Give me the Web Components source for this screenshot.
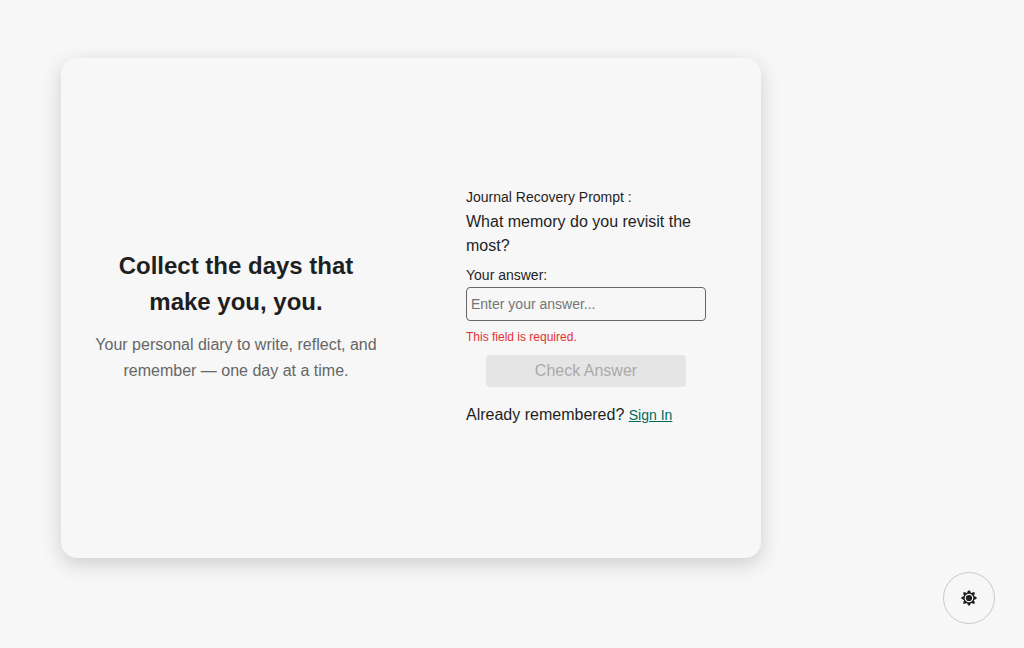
<!DOCTYPE html>
<html lang="en">
<head>
<meta charset="utf-8">
<meta name="viewport" content="width=device-width, initial-scale=1">
<title>Journal Recovery</title>
<style>
  body { margin: 0; background: #f7f7f7; color: #1f1f1f; font: 16px/24px "Liberation Sans", Arial, sans-serif; }
</style>
</head>
<body>
<diary-page>
  <auth-card>
    <diary-intro slot="intro">
      <span slot="title">Collect the days that make you, you.</span>
      <span slot="text">Your personal diary to write, reflect, and remember — one day at a time.</span>
    </diary-intro>
    <recovery-form slot="form">What memory do you revisit the most?</recovery-form>
  </auth-card>
  <theme-toggle slot="floating"></theme-toggle>
</diary-page>

<script>
const define = (name, markup) => {
  const template = document.createElement('template');
  template.innerHTML = '<style>*{box-sizing:border-box}</style>' + markup;
  customElements.define(name, class extends HTMLElement {
    constructor() {
      super();
      this.attachShadow({ mode: 'open' }).append(template.content.cloneNode(true));
    }
  });
};

define('diary-page', `
  <style>
    :host { display: block; }
    main { padding: 58px 61px; }
  </style>
  <main><slot></slot></main>
  <slot name="floating"></slot>
`);

define('auth-card', `
  <style>
    :host {
      display: grid; grid-template-columns: 1fr 1fr; align-items: center;
      max-width: 700px; min-height: 500px; border-radius: 16px;
      background: #f7f7f7; box-shadow: 0 6px 20px rgba(0, 0, 0, .17);
    }
  </style>
  <slot name="intro"></slot>
  <slot name="form"></slot>
`);

define('diary-intro', `
  <style>
    :host { display: block; padding: 16px 32px 0; text-align: center; }
    h1 { margin: 0 0 12px; font-size: 24px; line-height: 36px; }
    p { margin: 0; line-height: 26px; color: #666; }
  </style>
  <h1><slot name="title"></slot></h1>
  <p><slot name="text"></slot></p>
`);

define('recovery-form', `
  <style>
    :host { display: block; width: 240px; margin: 0 auto; padding-bottom: 4px; }
    form { display: flex; flex-direction: column; }
    h2, p { margin: 0; }
    h2, label, a { font-size: 14px; font-weight: 400; }
    h2 { margin-bottom: 1px; }
    label { margin-top: 5px; }
    input {
      width: 100%; height: 34px; padding: 4px; border: 1px solid #666; border-radius: 4px;
      background: transparent; color: inherit; font: 14px "Liberation Sans", Arial, sans-serif;
    }
    input::placeholder { color: #757575; }
    .error { margin-top: 8px; font-size: 12px; line-height: 16px; color: #e53030; }
    button {
      align-self: center; width: 200px; height: 32px; margin: 10px 0 16px; padding: 0;
      border: 0; border-radius: 4px; background: #e5e5e5; color: #aaa;
      font: 16px "Liberation Sans", Arial, sans-serif;
    }
    a { color: #00695c; }
  </style>
  <form novalidate>
    <h2>Journal Recovery Prompt :</h2>
    <p><slot></slot></p>
    <label for="answer">Your answer:</label>
    <input id="answer" type="text" placeholder="Enter your answer..." aria-describedby="error" required>
    <p class="error" id="error">This field is required.</p>
    <button type="submit" disabled>Check Answer</button>
    <p>Already remembered? <a href="#sign-in">Sign In</a></p>
  </form>
`);

define('theme-toggle', `
  <style>
    :host { display: block; position: fixed; right: 29px; bottom: 24px; }
    button {
      display: grid; place-items: center; width: 52px; height: 52px; padding: 0;
      border: 1px solid #c8c8c8; border-radius: 50%; background: #f7f7f7; color: #1f1f1f;
    }
    svg { display: block; width: 16px; height: 16px; }
  </style>
  <button type="button" aria-label="Switch theme">
    <svg viewBox="0 0 16 16" aria-hidden="true">
      <g fill="currentColor">
        <path d="M8 0 9.2 1.2 9.8 3.2H6.2L6.8 1.2Z"/>
        <path d="M8 0 9.2 1.2 9.8 3.2H6.2L6.8 1.2Z" transform="rotate(45 8 8)"/>
        <path d="M8 0 9.2 1.2 9.8 3.2H6.2L6.8 1.2Z" transform="rotate(90 8 8)"/>
        <path d="M8 0 9.2 1.2 9.8 3.2H6.2L6.8 1.2Z" transform="rotate(135 8 8)"/>
        <path d="M8 0 9.2 1.2 9.8 3.2H6.2L6.8 1.2Z" transform="rotate(180 8 8)"/>
        <path d="M8 0 9.2 1.2 9.8 3.2H6.2L6.8 1.2Z" transform="rotate(225 8 8)"/>
        <path d="M8 0 9.2 1.2 9.8 3.2H6.2L6.8 1.2Z" transform="rotate(270 8 8)"/>
        <path d="M8 0 9.2 1.2 9.8 3.2H6.2L6.8 1.2Z" transform="rotate(315 8 8)"/>
        <circle cx="8" cy="8" r="3.1"/>
      </g>
      <circle cx="8" cy="8" r="5" fill="none" stroke="currentColor" stroke-width="1.3"/>
    </svg>
  </button>
`);
</script>
</body>
</html>
